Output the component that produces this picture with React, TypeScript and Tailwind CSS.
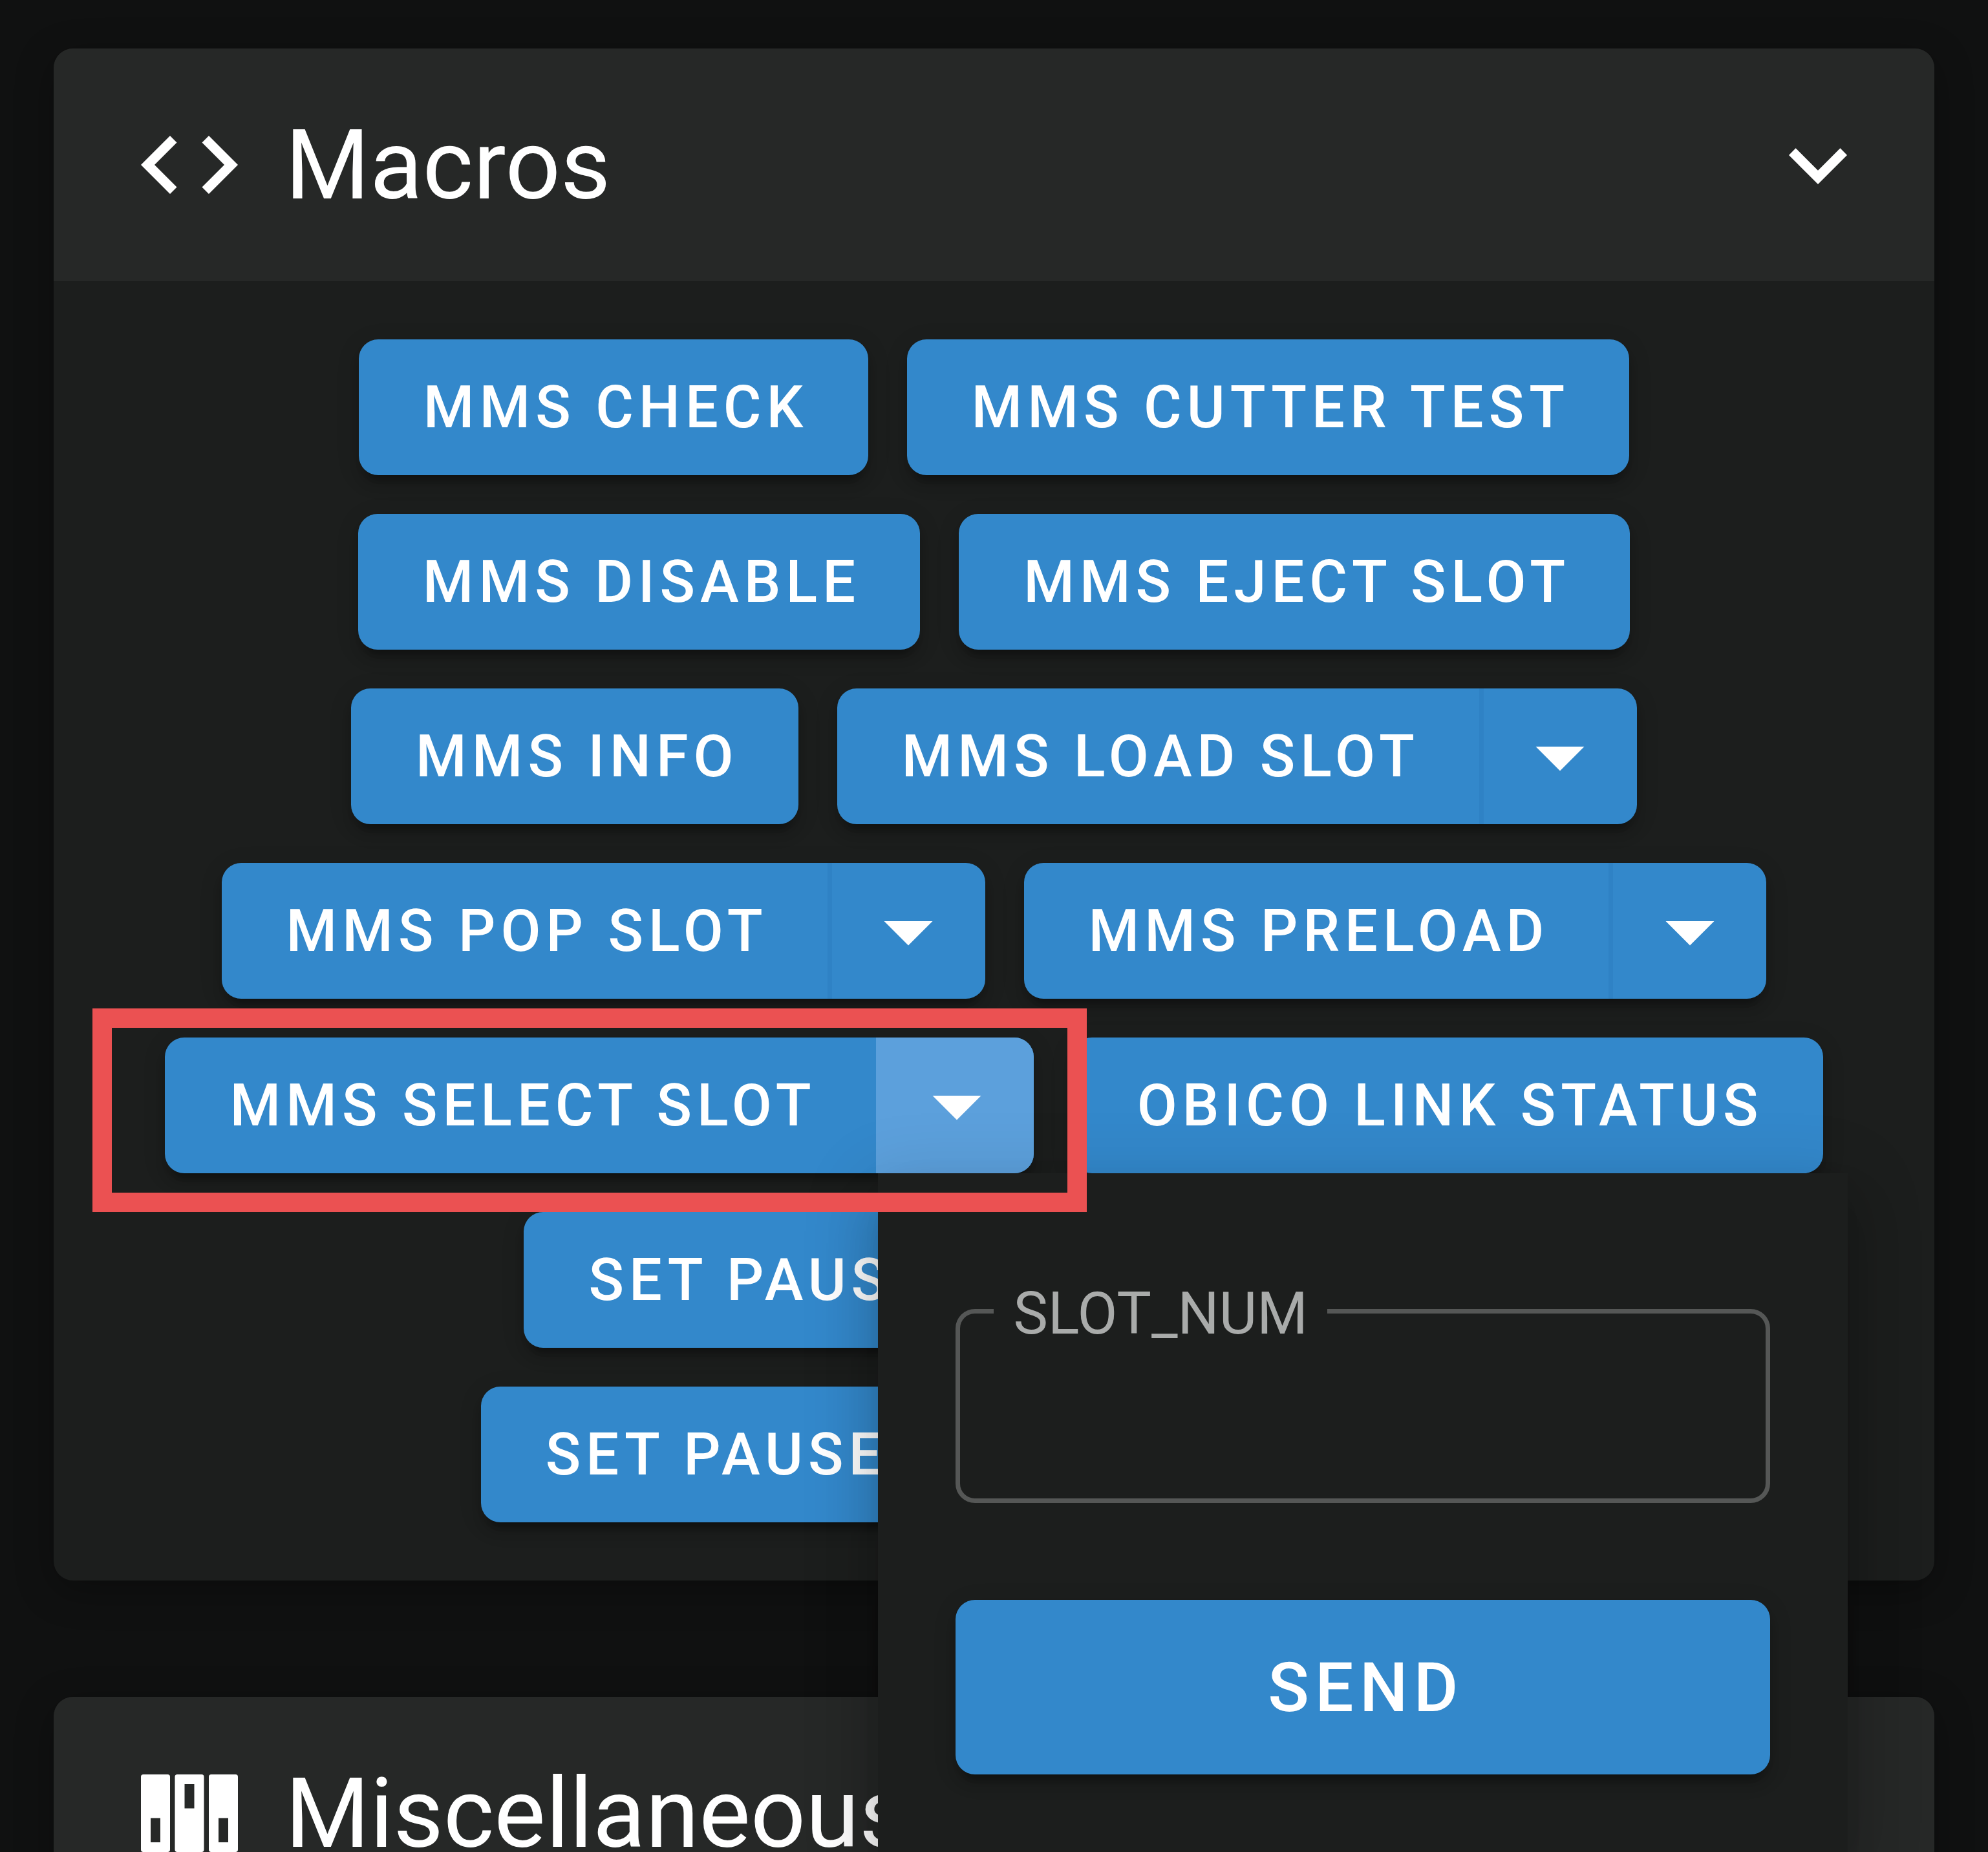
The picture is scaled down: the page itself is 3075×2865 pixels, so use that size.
import type { ReactNode } from "react"

const CODE_TAGS =
  "M14.6,16.6L19.2,12L14.6,7.4L16,6L22,12L16,18L14.6,16.6M9.4,16.6L4.8,12L9.4,7.4L8,6L2,12L8,18L9.4,16.6Z"
const CHEVRON_DOWN = "M7.41,8.58L12,13.17L16.59,8.58L18,10L12,16L6,10L7.41,8.58Z"
const MENU_DOWN = "M7,10L12,15L17,10H7Z"
const DIP_SWITCH =
  "M2.5 4h5a.5.5 0 0 1 .5.5v15a.5.5 0 0 1-.5.5h-5a.5.5 0 0 1-.5-.5v-15a.5.5 0 0 1 .5-.5zM4 13v5h2v-5H4z" +
  "M9.5 4h5a.5.5 0 0 1 .5.5v15a.5.5 0 0 1-.5.5h-5a.5.5 0 0 1-.5-.5v-15a.5.5 0 0 1 .5-.5zM11 6v5h2V6h-2z" +
  "M16.5 4h5a.5.5 0 0 1 .5.5v15a.5.5 0 0 1-.5.5h-5a.5.5 0 0 1-.5-.5v-15a.5.5 0 0 1 .5-.5zM18 13v5h2v-5h-2z"

const BUTTON_SHADOW =
  "shadow-[0_22px_7px_-15px_rgba(0,0,0,0.2),0_15px_15px_0_rgba(0,0,0,0.14),0_7px_37px_0_rgba(0,0,0,0.12)]"

const MACROS: { name: string; params?: boolean; open?: boolean }[] = [
  { name: "MMS CHECK" },
  { name: "MMS CUTTER TEST" },
  { name: "MMS DISABLE" },
  { name: "MMS EJECT SLOT" },
  { name: "MMS INFO" },
  { name: "MMS LOAD SLOT", params: true },
  { name: "MMS POP SLOT", params: true },
  { name: "MMS PRELOAD", params: true },
  { name: "MMS SELECT SLOT", params: true, open: true },
  { name: "OBICO LINK STATUS" },
  { name: "SET PAUSE AT LAYER", params: true },
  { name: "SET PAUSE NEXT LAYER", params: true },
]

function Icon({ path, className }: { path: string; className?: string }) {
  return (
    <svg viewBox="0 0 24 24" fill="currentColor" className={className}>
      <path d={path} fillRule="evenodd" />
    </svg>
  )
}

function Panel({ icon, title, children }: { icon: string; title: string; children?: ReactNode }) {
  return (
    <section className="rounded-[30px] bg-[#1c1e1d] shadow-[0_15px_60px_rgba(0,0,0,0.3)]">
      <header className="flex h-[360px] items-center rounded-t-[30px] bg-[#262827] pr-[90px] pl-[120px] text-white">
        <Icon path={icon} className="size-[180px] flex-none" />
        <h2 className="ml-[58px] pt-[2px] text-[150px] leading-none font-normal">{title}</h2>
        <Icon path={CHEVRON_DOWN} className="ml-auto size-[180px] flex-none" />
      </header>
      {children}
    </section>
  )
}

/** Parameter popup opened from the dropdown half of a macro button. */
function ParamMenu() {
  return (
    <div className="absolute top-full left-[1103px] z-10 w-[1500px] bg-[#1c1e1d] px-[120px] pt-[210px] pb-[120px] shadow-[0_37px_37px_-22px_rgba(0,0,0,0.2),0_60px_75px_7px_rgba(0,0,0,0.14),0_22px_105px_15px_rgba(0,0,0,0.12)]">
      <div className="relative h-[300px] rounded-[30px] border-[7px] border-[#555756]">
        <span className="absolute -top-[44px] left-[52px] bg-[#1c1e1d] px-[30px] text-[90px] leading-[90px] tracking-normal text-[#a9abaa]">
          SLOT_NUM
        </span>
      </div>
      <button
        className={`mt-[150px] flex h-[270px] w-full items-center justify-center rounded-[30px] bg-[#3388cb] pt-[3px] pl-[9px] text-[105px] font-medium tracking-[0.0892857em] text-white ${BUTTON_SHADOW}`}
      >
        SEND
      </button>
    </div>
  )
}

function MacroButton({ name, params, open }: { name: string; params?: boolean; open?: boolean }) {
  return (
    <div className={`relative flex h-[210px] rounded-[30px] bg-[#3388cb] text-white ${BUTTON_SHADOW}`}>
      <button className="pr-[92px] pl-[100px] text-[90px] font-medium tracking-[0.0892857em] whitespace-nowrap">
        {name}
      </button>
      {params && (
        <button
          className={`flex w-[244px] items-center justify-center rounded-r-[30px] border-l-[7px] ${
            open ? "border-[#5ca0dc] bg-[#5ca0dc]" : "border-[#2f82c5]"
          }`}
        >
          <Icon path={MENU_DOWN} className="size-[180px]" />
        </button>
      )}
      {open && (
        <>
          <ParamMenu />
          <div className="pointer-events-none absolute -top-[45px] -right-[82px] -bottom-[60px] -left-[112px] z-20 border-[30px] border-[#eb5152]" />
        </>
      )}
    </div>
  )
}

export default function App() {
  return (
    <div className="h-[2865px] overflow-hidden bg-[#101111] px-[83px] pt-[75px] font-['Roboto',sans-serif]">
      <Panel icon={CODE_TAGS} title="Macros">
        <div className="flex flex-wrap justify-center gap-[60px] px-[120px] py-[90px]">
          {MACROS.map((macro) => (
            <MacroButton key={macro.name} {...macro} />
          ))}
        </div>
      </Panel>
      <div className="mt-[180px]">
        <Panel icon={DIP_SWITCH} title="Miscellaneous" />
      </div>
    </div>
  )
}
